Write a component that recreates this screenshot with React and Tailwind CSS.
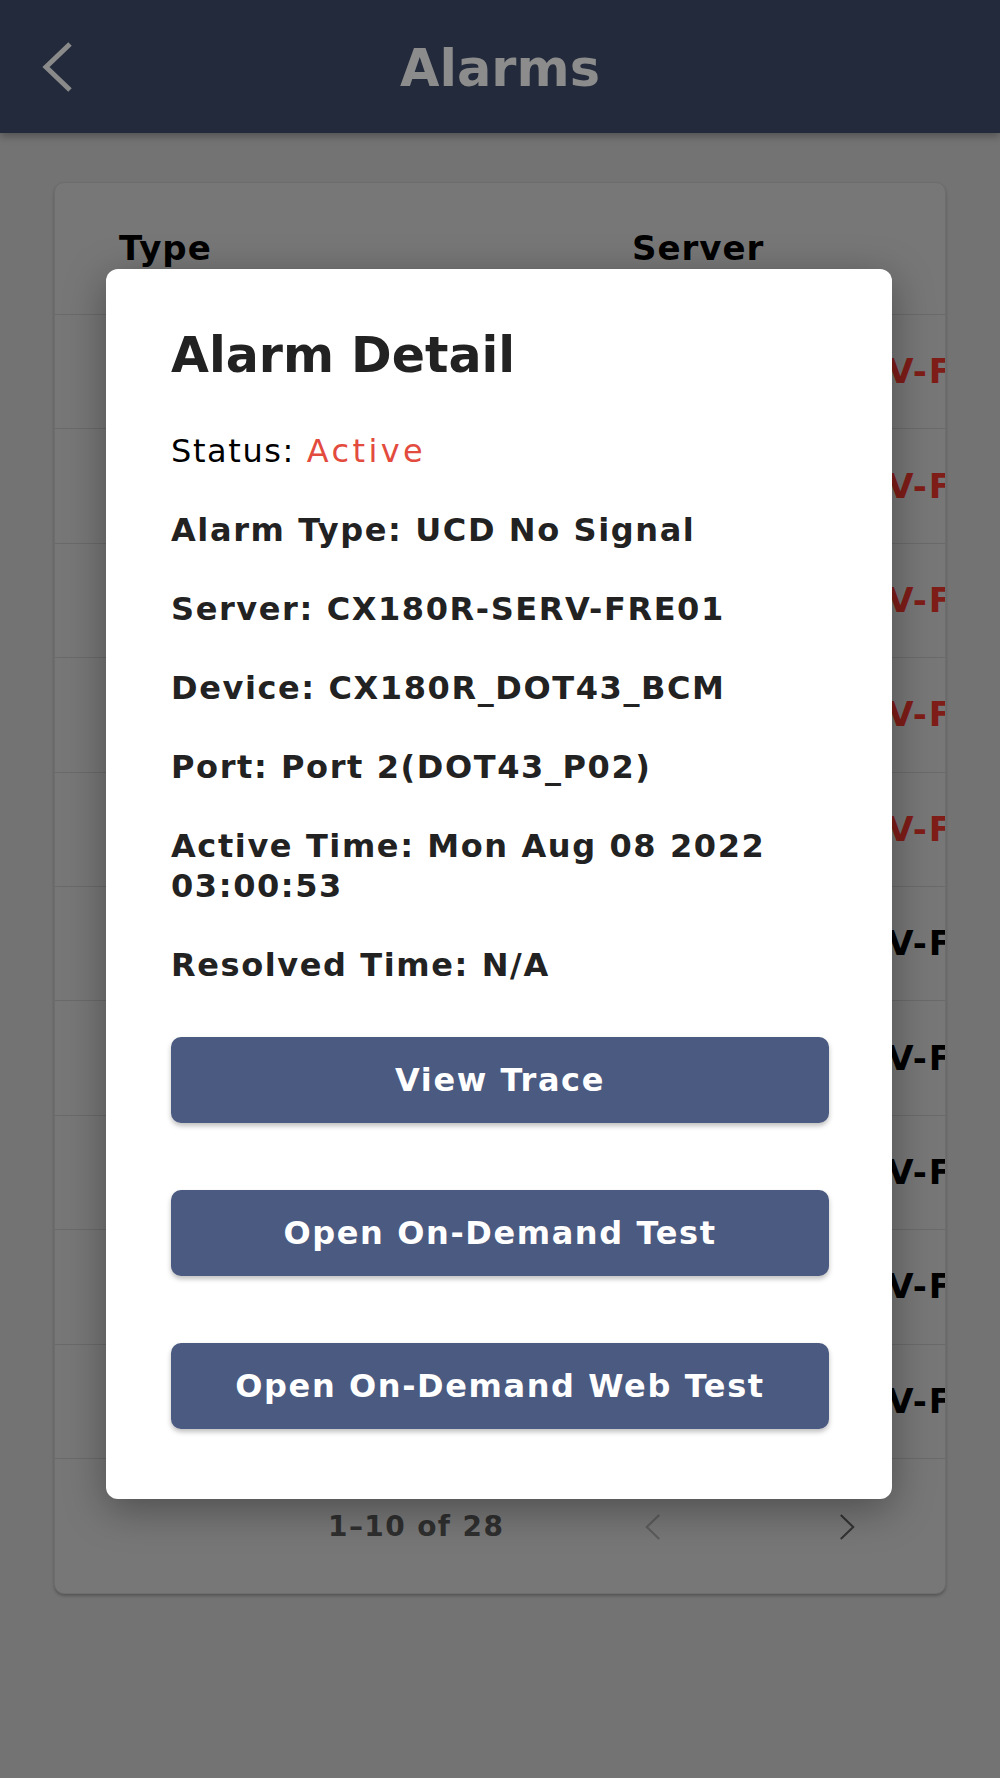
const ROWS = [
  { type: "UCD No Signal", server: "CX180R-SERV-FRE01", active: true },
  { type: "UCD No Signal", server: "CX180R-SERV-FRE01", active: true },
  { type: "UCD No Signal", server: "CX180R-SERV-FRE01", active: true },
  { type: "UCD No Signal", server: "CX180R-SERV-FRE01", active: true },
  { type: "UCD No Signal", server: "CX180R-SERV-FRE01", active: true },
  { type: "UCD No Signal", server: "CX180R-SERV-FRE01", active: false },
  { type: "UCD No Signal", server: "CX180R-SERV-FRE01", active: false },
  { type: "UCD No Signal", server: "CX180R-SERV-FRE01", active: false },
  { type: "UCD No Signal", server: "CX180R-SERV-FRE01", active: false },
  { type: "UCD No Signal", server: "CX180R-SERV-FRE01", active: false },
];

const DETAILS = [
  ["Alarm Type:", "UCD No Signal"],
  ["Server:", "CX180R-SERV-FRE01"],
  ["Device:", "CX180R_DOT43_BCM"],
  ["Port:", "Port 2(DOT43_P02)"],
];

function Chevron({ dir = "left", className, stroke = 5 }) {
  const pts = dir === "left" ? "30,4 6,27 30,50" : "6,4 30,27 6,50";
  return (
    <svg viewBox="0 0 36 54" className={className} fill="none">
      <polyline points={pts} stroke="currentColor" strokeWidth={stroke} strokeLinejoin="miter" />
    </svg>
  );
}

function ModalButton({ children }) {
  return (
    <button className="h-[86px] w-full rounded-[10px] bg-[#4a5a80] text-white text-[32px] font-bold tracking-[1.6px] shadow-[0_3px_5px_rgba(0,0,0,0.25)]">
      {children}
    </button>
  );
}

export default function App() {
  return (
    <div className="relative h-[1778px] overflow-hidden bg-[#737373] font-['DejaVu_Sans',sans-serif]">
      {/* top bar */}
      <header className="relative h-[133px] bg-[#222a3b] flex items-center justify-center shadow-[0_3px_8px_rgba(0,0,0,0.3)]">
        <Chevron dir="left" className="absolute left-[40px] top-[40px] w-[36px] h-[54px] text-[#8a8a8a]" />
        <h1 className="mt-[4px] text-[51px] leading-none font-bold text-[#8c8c8c]">Alarms</h1>
      </header>

      {/* table card (dimmed behind modal) */}
      <div className="mx-[54px] mt-[49px] rounded-[10px] border border-[#6d6d6d] bg-[#777777] overflow-hidden shadow-[0_2px_3px_rgba(0,0,0,0.25)]">
        <div className="flex h-[132px] pt-[45px] border-b border-[#6a6a6a] text-[34px] leading-[40px] font-bold text-black tracking-[1px]">
          <div className="w-[577px] pl-[64px]">Type</div>
          <div>Server</div>
        </div>
        {ROWS.map((r, i) => (
          <div key={i} className="flex items-center h-[114.4px] border-b border-[#6a6a6a] text-[34px] font-bold tracking-[1.7px] whitespace-nowrap">
            <div className="w-[577px] pl-[64px] shrink-0 text-black">{r.type}</div>
            <div className={r.active ? "pl-[2px] text-[#7f1d18]" : "pl-[2px] text-black"}>{r.server}</div>
          </div>
        ))}
        <div className="flex items-center h-[134px] pt-[2px]">
          <div className="w-[273px]" />
          <div className="text-[28px] font-bold text-[#2f2f2f] tracking-[1.4px]">1–10 of 28</div>
          <Chevron dir="left" stroke={4} className="ml-[139px] w-[20px] h-[28px] text-[#5c5c5c]" />
          <Chevron dir="right" stroke={4} className="ml-[174px] w-[20px] h-[28px] text-[#333333]" />
        </div>
      </div>

      {/* alarm detail modal */}
      <div className="absolute left-[106px] top-[269px] w-[786px] rounded-[12px] bg-white pt-[57px] pl-[65px] pr-[63px] pb-[70px] shadow-[0_10px_40px_rgba(0,0,0,0.35)]">
        <h2 className="text-[49px] leading-[59px] font-bold text-[#222]">Alarm Detail</h2>
        <div className="mt-[46px] flex flex-col gap-[39px] text-[32px] leading-[40px] tracking-[1.6px] text-[#222]">
          <p className="text-black">
            Status: <span className="text-[#e24b3d] tracking-[3.4px]">Active</span>
          </p>
          {DETAILS.map(([k, v]) => (
            <p key={k} className="font-bold">
              {k} {v}
            </p>
          ))}
          <p className="font-bold">
            Active Time: Mon Aug 08 2022
            <br />
            03:00:53
          </p>
          <p className="font-bold">Resolved Time: N/A</p>
        </div>
        <div className="mt-[52px] flex flex-col gap-[67px]">
          <ModalButton>View Trace</ModalButton>
          <ModalButton>Open On-Demand Test</ModalButton>
          <ModalButton>Open On-Demand Web Test</ModalButton>
        </div>
      </div>
    </div>
  );
}
